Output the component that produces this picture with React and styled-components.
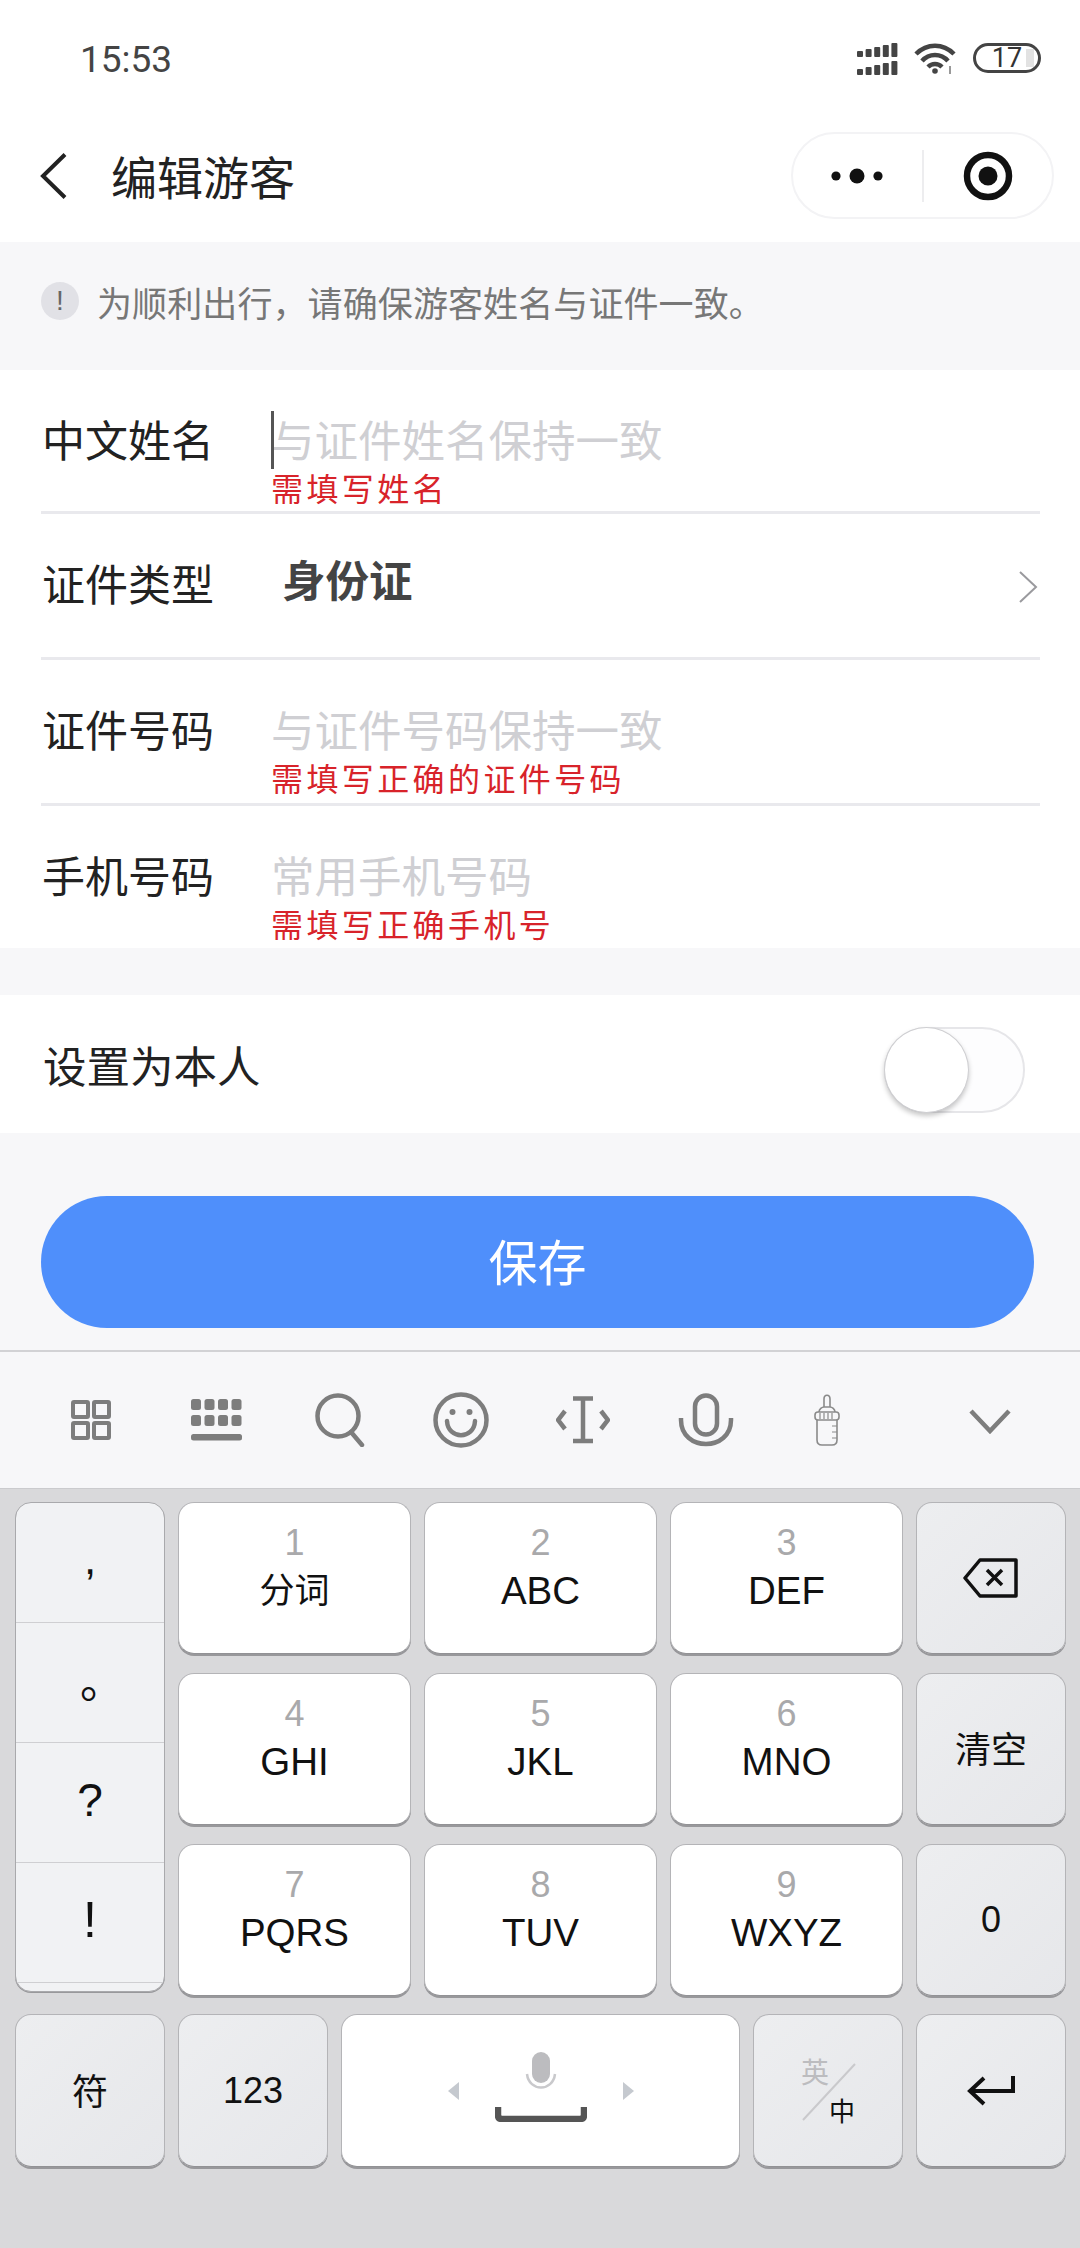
import React from "react";
import styled, { createGlobalStyle } from "styled-components";

const GlobalStyle = createGlobalStyle`
  * { box-sizing: border-box; }
  html, body { margin: 0; padding: 0; background: #fff; }
  body { font-family: "Noto Sans CJK SC", "Liberation Sans", sans-serif; }
`;

const Page = styled.div`
  width: 1080px;
  height: 2248px;
  overflow: hidden;
  display: flex;
  flex-direction: column;
  background: #f7f7f9;
`;

/* status bar */
const StatusBar = styled.div`
  height: 120px;
  flex-shrink: 0;
  background: #fff;
  display: flex;
  align-items: flex-start;
  justify-content: space-between;
  padding: 43px 39px 0 80px;
`;

const Time = styled.span`
  font-family: Roboto, "Liberation Sans", sans-serif;
  font-size: 37px;
  line-height: 34px;
  color: #444;
`;

const StatusIcons = styled.div`
  display: flex;
  align-items: flex-start;
  gap: 15px;
`;

const Battery = styled.div`
  width: 68px;
  height: 30px;
  border: 3px solid #444;
  border-radius: 15px;
  display: flex;
  align-items: center;
  justify-content: center;
  font-family: Roboto, "Liberation Sans", sans-serif;
  font-size: 27px;
  line-height: 24px;
  color: #333;
  position: relative;
  overflow: hidden;
  &::after {
    content: "";
    position: absolute;
    right: 4px;
    top: 3px;
    bottom: 3px;
    width: 8px;
    background: #e2e2e2;
  }
`;

/* nav header */
const Header = styled.div`
  height: 122px;
  flex-shrink: 0;
  background: #fff;
  display: flex;
  align-items: center;
  padding: 0 26px 11px 40px;
`;

const Title = styled.h1`
  margin: 0 0 2px 44px;
  font-size: 46px;
  line-height: 60px;
  font-weight: 400;
  color: #222;
  flex: 1;
`;

const Capsule = styled.div`
  width: 263px;
  height: 87px;
  border: 2px solid #f3f3f5;
  border-radius: 44px;
  display: flex;
  align-items: center;
`;

const CapsuleSide = styled.div`
  flex: 1;
  display: flex;
  align-items: center;
  justify-content: center;
  height: 52px;
  & + & { border-left: 2px solid #ededef; }
`;

/* notice */
const Notice = styled.div`
  height: 128px;
  flex-shrink: 0;
  display: flex;
  align-items: center;
  gap: 18px;
  padding: 0 0 10px 41px;
  font-size: 35px;
  letter-spacing: 0.1px;
  color: #777;
`;

const NoticeIcon = styled.span`
  width: 38px;
  height: 38px;
  border-radius: 50%;
  background: #e1e1e6;
  color: #666;
  display: flex;
  align-items: center;
  justify-content: center;
  font-family: "Liberation Sans", sans-serif;
  font-size: 28px;
`;

/* form */
const Form = styled.div`
  height: 578px;
  flex-shrink: 0;
  background: #fff;
  padding: 0 40px 0 41px;
`;

const FieldRow = styled.div`
  height: ${({ $height }) => $height}px;
  display: grid;
  grid-template-columns: 230px 1fr;
  border-bottom: ${({ $last }) => ($last ? "none" : "3px solid #e9e9ed")};
`;

const Label = styled.div`
  margin-top: 38px;
  padding-left: 1px;
  font-size: 43px;
  line-height: 60px;
  color: #222;
`;

const FieldBody = styled.div`
  position: relative;
  display: flex;
  flex-direction: column;
  align-items: flex-start;
`;

const Placeholder = styled.div`
  margin-top: 40px;
  font-size: 43.5px;
  line-height: 58px;
  color: #cfcfd3;
`;

const Caret = styled.span`
  position: absolute;
  left: 0;
  top: 41px;
  width: 3px;
  height: 58px;
  background: #555;
`;

const ErrorText = styled.div`
  margin-top: -1px;
  font-size: 32px;
  line-height: 40px;
  letter-spacing: 3.4px;
  color: #d8232a;
`;

const SelectValue = styled.div`
  flex: 1;
  margin: 35px 0 0 11px;
  font-size: 43.5px;
  line-height: 60px;
  font-weight: 700;
  color: #444;
`;

const SelectBody = styled.div`
  display: flex;
  align-items: flex-start;
`;

const RowChevron = styled.svg`
  margin-top: 57px;
  margin-right: 2px;
`;

const ToggleRow = styled.div`
  height: 138px;
  margin-top: 47px;
  flex-shrink: 0;
  background: #fff;
  display: flex;
  align-items: center;
  justify-content: space-between;
  padding: 0 55px 0 43px;
  font-size: 43.5px;
  color: #222;
`;

const Toggle = styled.div`
  position: relative;
  width: 141px;
  height: 86px;
  margin-top: 12px;
  border: 2px solid #e6e6e9;
  border-radius: 43px;
  background: #fdfdfe;
`;

const Knob = styled.span`
  position: absolute;
  left: -2px;
  top: -2px;
  width: 85px;
  height: 86px;
  border-radius: 50%;
  background: #fff;
  border: 1px solid #cfcfd2;
  box-shadow: 0 3px 5px rgba(0, 0, 0, 0.22);
`;

const SaveButton = styled.button`
  display: block;
  width: 993px;
  height: 132px;
  margin: 63px 0 22px 41px;
  padding: 0 0 5px;
  flex-shrink: 0;
  border: none;
  border-radius: 66px;
  background: #4f8ffb;
  color: #fff;
  font-family: inherit;
  font-size: 49px;
`;

/* keyboard toolbar */
const Toolbar = styled.div`
  height: 138px;
  flex-shrink: 0;
  border-top: 2px solid #d2d2d5;
  display: grid;
  grid-template-columns: 122px 130px 116px 126px 118px 128px 114px 1fr;
  align-items: center;
  justify-items: center;
  padding-left: 30px;
`;

const ToolbarEnd = styled.div`
  justify-self: start;
  margin: 2px 0 0 85px;
  display: flex;
`;

/* keyboard */
const Keyboard = styled.div`
  flex: 1;
  background: #d9d9db;
  border-top: 1px solid #cbcbce;
  padding: 13px 15px 0;
`;

const KeyGrid = styled.div`
  display: grid;
  grid-template-columns: 150px 233px 233px 233px 150px;
  grid-template-rows: repeat(3, 152px);
  column-gap: 13px;
  row-gap: 19px;
`;

const BottomRow = styled.div`
  display: grid;
  grid-template-columns: 150px 150px 399px 150px 150px;
  column-gap: 13px;
  height: 153px;
  margin-top: 18px;
`;

const Key = styled.div`
  position: relative;
  border: 1px solid #b4b4b7;
  border-bottom-color: #929295;
  border-radius: 16px;
  box-shadow: 0 2px 0 #98989b;
  background: ${({ $fn }) => ($fn ? "linear-gradient(135deg, #edeef0, #e6e7ea)" : "#fff")};
  color: #111;
  font-family: "Liberation Sans", "Noto Sans CJK SC", sans-serif;
  font-size: 36px;
  padding-bottom: ${({ $lift }) => $lift || 0}px;
  display: flex;
  flex-direction: column;
  align-items: center;
  justify-content: center;
`;

const Digit = styled.span`
  font-size: 36px;
  line-height: 40px;
  margin-top: -18px;
  color: #a9a9ab;
`;

const Letters = styled.span`
  font-size: ${({ $cjk }) => ($cjk ? 35 : 38.5)}px;
  line-height: 50px;
  margin-top: 3px;
`;

const PunctColumn = styled.div`
  grid-column: 1;
  grid-row: 1 / span 3;
  height: 490px;
  border: 1px solid #a9a9ac;
  border-radius: 16px;
  box-shadow: 0 1px 0 #98989b;
  background: #f1f2f4;
  overflow: hidden;
  display: flex;
  flex-direction: column;
`;

const PunctCell = styled.div`
  height: ${({ $h }) => $h || 120}px;
  flex-shrink: 0;
  border-bottom: ${({ $end }) => ($end ? "none" : "1px solid #cfcfd2")};
  display: flex;
  align-items: center;
  justify-content: center;
  font-family: "Liberation Sans", "Noto Sans CJK SC", sans-serif;
  font-size: ${({ $size }) => $size || 48}px;
  color: #111;
  padding-bottom: ${({ $lift }) => $lift || 0}px;
  padding-left: ${({ $shift }) => $shift || 0}px;
`;

const SpaceKey = styled(Key)`
  flex-direction: row;
  gap: 36px;
`;

const LangKey = styled(Key)`
  align-items: flex-start;
  justify-content: flex-start;
`;

const LangTop = styled.span`
  margin: 41px 0 0 47px;
  font-family: "Noto Sans CJK SC", sans-serif;
  font-size: 28px;
  line-height: 30px;
  color: #bcbcbf;
`;

const LangBottom = styled.span`
  margin: 9px 0 0 75px;
  font-family: "Noto Sans CJK SC", sans-serif;
  font-size: 26px;
  line-height: 30px;
  color: #111;
`;

const LangSlash = styled.svg`
  position: absolute;
  left: 48px;
  top: 48px;
`;

const SpaceMicSvg = styled.svg`
  margin-bottom: 8px;
`;

const SignalIcon = () => (
  <svg width="42" height="32" viewBox="0 0 42 32" fill="#444">
    {[0, 1].map((r) =>
      [0, 1, 2, 3, 4].map((i) => (
        <rect
          key={`${r}-${i}`}
          x={i * 8.6}
          y={r * 18 + (8 - i * 2)}
          width="6"
          height={6 + i * 2}
          rx="1"
        />
      ))
    )}
  </svg>
);

const WifiIcon = () => (
  <svg width="44" height="32" viewBox="0 0 44 32" fill="none" stroke="#444" strokeWidth="4.5">
    <path d="M2 11C13 0 29 0 40 11" />
    <path d="M8 18C15 10 27 10 34 18" />
    <path d="M14 24C18 20 24 20 28 24" />
    <circle cx="21" cy="28" r="2.8" fill="#444" stroke="none" />
    <path d="M36 23v8" stroke="#999" strokeWidth="2" />
  </svg>
);

const DotsIcon = () => (
  <svg width="52" height="16" viewBox="0 0 52 16" fill="#111">
    <circle cx="5" cy="8" r="4.6" />
    <circle cx="26" cy="8" r="7.5" />
    <circle cx="47" cy="8" r="4.6" />
  </svg>
);

const TargetIcon = () => (
  <svg width="50" height="50" viewBox="0 0 50 50">
    <circle cx="25" cy="25" r="21" fill="none" stroke="#111" strokeWidth="6.5" />
    <circle cx="25" cy="25" r="9.5" fill="#111" />
  </svg>
);

const BackIcon = () => (
  <svg width="27" height="46" viewBox="0 0 27 46" fill="none" stroke="#222" strokeWidth="4">
    <path d="M25 1.5L3 23l22 21.5" />
  </svg>
);

const GridIcon = () => (
  <svg width="40" height="40" viewBox="0 0 40 40" fill="none" stroke="#7d7d7d" strokeWidth="4">
    <rect x="2" y="2" width="15" height="15" rx="1" />
    <rect x="23" y="2" width="15" height="15" rx="1" />
    <rect x="2" y="23" width="15" height="15" rx="1" />
    <rect x="23" y="23" width="15" height="15" rx="1" />
  </svg>
);

const KeyboardIcon = () => (
  <svg width="52" height="42" viewBox="0 0 52 42" fill="#7d7d7d">
    {[0, 16].map((y) =>
      [0, 13.5, 27, 40.5].map((x) => <rect key={`${x}-${y}`} x={x} y={y} width="10" height="11" rx="2.5" />)
    )}
    <rect x="0" y="35" width="51" height="6.5" rx="2.5" />
  </svg>
);

const SearchIcon = () => (
  <svg width="50" height="54" viewBox="0 0 50 54" fill="none" stroke="#7d7d7d" strokeWidth="4.5" strokeLinecap="round">
    <circle cx="23" cy="23" r="20.5" />
    <path d="M36 39l11 13" />
  </svg>
);

const SmileIcon = () => (
  <svg width="56" height="56" viewBox="0 0 56 56" fill="none" stroke="#7d7d7d" strokeWidth="4.5" strokeLinecap="round">
    <circle cx="28" cy="28" r="25.5" />
    <circle cx="19.5" cy="20" r="3" fill="#7d7d7d" stroke="none" />
    <circle cx="36.5" cy="20" r="3" fill="#7d7d7d" stroke="none" />
    <path d="M14 29c1 19 27 19 28 0" />
  </svg>
);

const CursorIcon = () => (
  <svg width="54" height="48" viewBox="0 0 54 48" fill="none" stroke="#7d7d7d" strokeWidth="4.5">
    <path d="M17 2.5h20M17 45h20M27 2.5V45" />
    <path d="M9 15L2 24l7 9M45 15l7 9-7 9" />
  </svg>
);

const MicIcon = () => (
  <svg width="56" height="54" viewBox="0 0 56 54" fill="none" stroke="#7d7d7d" strokeWidth="4.5">
    <rect x="17" y="2.5" width="22" height="39" rx="11" />
    <path d="M3 25v2c0 32 50 32 50 0v-2" />
  </svg>
);

const BottleIcon = () => (
  <svg width="30" height="52" viewBox="0 0 30 52" fill="none" stroke="#8a8a8a" strokeWidth="1.6">
    <path d="M12 13V5c0-5 6-5 6 0v8" />
    <path d="M7 18c0-3 3-5 5-5h6c2 0 5 2 5 5" />
    <rect x="3" y="18" width="24" height="8" rx="3" />
    <path d="M8 19v6M12 19v6M16 19v6M20 19v6" strokeWidth="1.2" />
    <path d="M5 26v20c0 3 2 5 5 5h10c3 0 5-2 5-5V26" />
    <path d="M20 32h5M20 38h5M20 44h5" strokeWidth="1.2" />
  </svg>
);

const DownIcon = () => (
  <svg width="42" height="25" viewBox="0 0 42 25" fill="none" stroke="#7d7d7d" strokeWidth="4.5">
    <path d="M2 2l19 20L40 2" />
  </svg>
);

const BackspaceIcon = () => (
  <svg width="56" height="40" viewBox="0 0 56 40" fill="none" stroke="#111" strokeWidth="3.5">
    <path d="M17 2h36v36H17L2 20z" strokeLinejoin="round" />
    <path d="M24 12l15 15M39 12L24 27" />
  </svg>
);

const EnterIcon = () => (
  <svg width="48" height="32" viewBox="0 0 48 32" fill="none" stroke="#111" strokeWidth="4">
    <path d="M46 1v15H4" />
    <path d="M17 3L3 16l14 13" />
  </svg>
);

const ArrowIcon = ({ flip }) => (
  <svg width="11" height="18" viewBox="0 0 11 18" fill="#c5c9cf">
    <path d={flip ? "M0 0l11 9L0 18z" : "M11 0L0 9l11 9z"} />
  </svg>
);

const SpaceMicIcon = () => (
  <SpaceMicSvg width="92" height="70" viewBox="0 0 92 70">
    <rect x="37" y="0" width="18" height="31" rx="9" fill="#bcbcbf" />
    <path d="M32 22c2 18 26 18 28 0" fill="none" stroke="#c9c9cc" strokeWidth="2.5" />
    <path d="M3 55v8q0 4 4 4h78q4 0 4-4v-8" fill="none" stroke="#555" strokeWidth="6.5" />
  </SpaceMicSvg>
);

const digitKeys = [
  ["1", "分词", true],
  ["2", "ABC"],
  ["3", "DEF"],
  ["4", "GHI"],
  ["5", "JKL"],
  ["6", "MNO"],
  ["7", "PQRS"],
  ["8", "TUV"],
  ["9", "WXYZ"],
];

const sideKeys = [
  { content: <BackspaceIcon key="back" />, lift: 0 },
  { content: "清空", lift: 4 },
  { content: "0", lift: 0 },
];

const App = () => {
  return (
    <>
      <GlobalStyle />
      <Page>
        <StatusBar>
          <Time>15:53</Time>
          <StatusIcons>
            <SignalIcon />
            <WifiIcon />
            <Battery>17</Battery>
          </StatusIcons>
        </StatusBar>

        <Header>
          <BackIcon />
          <Title>编辑游客</Title>
          <Capsule>
            <CapsuleSide>
              <DotsIcon />
            </CapsuleSide>
            <CapsuleSide>
              <TargetIcon />
            </CapsuleSide>
          </Capsule>
        </Header>

        <Notice>
          <NoticeIcon>!</NoticeIcon>
          为顺利出行，请确保游客姓名与证件一致。
        </Notice>

        <Form>
          <FieldRow $height={144}>
            <Label>中文姓名</Label>
            <FieldBody>
              <Caret />
              <Placeholder>与证件姓名保持一致</Placeholder>
              <ErrorText>需填写姓名</ErrorText>
            </FieldBody>
          </FieldRow>
          <FieldRow $height={146}>
            <Label>证件类型</Label>
            <SelectBody>
              <SelectValue>身份证</SelectValue>
              <RowChevron width="20" height="32" viewBox="0 0 20 32" fill="none" stroke="#9a9a9e" strokeWidth="2">
                <path d="M2 1l16 15L2 31" />
              </RowChevron>
            </SelectBody>
          </FieldRow>
          <FieldRow $height={146}>
            <Label>证件号码</Label>
            <FieldBody>
              <Placeholder>与证件号码保持一致</Placeholder>
              <ErrorText>需填写正确的证件号码</ErrorText>
            </FieldBody>
          </FieldRow>
          <FieldRow $height={142} $last>
            <Label>手机号码</Label>
            <FieldBody>
              <Placeholder>常用手机号码</Placeholder>
              <ErrorText>需填写正确手机号</ErrorText>
            </FieldBody>
          </FieldRow>
        </Form>

        <ToggleRow>
          设置为本人
          <Toggle>
            <Knob />
          </Toggle>
        </ToggleRow>

        <SaveButton>保存</SaveButton>

        <Toolbar>
          <GridIcon />
          <KeyboardIcon />
          <SearchIcon />
          <SmileIcon />
          <CursorIcon />
          <MicIcon />
          <BottleIcon />
          <ToolbarEnd>
            <DownIcon />
          </ToolbarEnd>
        </Toolbar>

        <Keyboard>
          <KeyGrid>
            <PunctColumn>
              <PunctCell $lift={8} $size={44}>,</PunctCell>
              <PunctCell $lift={8} $shift={24} $size={44}>。</PunctCell>
              <PunctCell $lift={6} $size={46}>?</PunctCell>
              <PunctCell $lift={6} $size={50}>!</PunctCell>
              <PunctCell $h={10} $end />
            </PunctColumn>
            {digitKeys.map(([digit, letters, cjk], i) => (
              <React.Fragment key={digit}>
                <Key>
                  <Digit>{digit}</Digit>
                  <Letters $cjk={cjk}>{letters}</Letters>
                </Key>
                {i % 3 === 2 && (
                  <Key $fn $lift={sideKeys[(i - 2) / 3].lift}>
                    {sideKeys[(i - 2) / 3].content}
                  </Key>
                )}
              </React.Fragment>
            ))}
          </KeyGrid>
          <BottomRow>
            <Key $fn $lift={4}>符</Key>
            <Key $fn>123</Key>
            <SpaceKey>
              <ArrowIcon />
              <SpaceMicIcon />
              <ArrowIcon flip />
            </SpaceKey>
            <LangKey $fn>
              <LangTop>英</LangTop>
              <LangBottom>中</LangBottom>
              <LangSlash width="54" height="58" viewBox="0 0 54 58" fill="none" stroke="#c9c9cc" strokeWidth="2">
                <path d="M1 57L53 1" />
              </LangSlash>
            </LangKey>
            <Key $fn>
              <EnterIcon />
            </Key>
          </BottomRow>
        </Keyboard>
      </Page>
    </>
  );
};

export default App;
